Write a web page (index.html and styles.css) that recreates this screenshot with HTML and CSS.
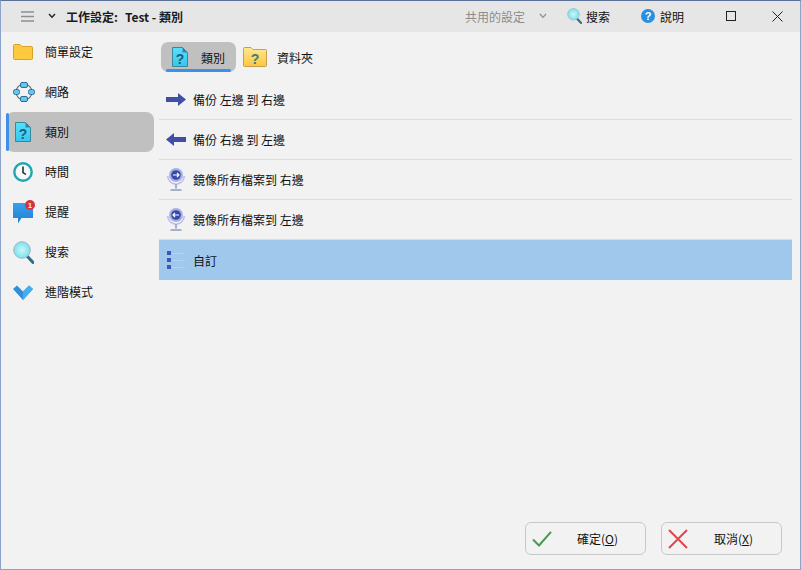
FILE: index.html
```html
<!DOCTYPE html>
<html lang="zh-Hant">
<head>
<meta charset="utf-8">
<title>工作設定</title>
<link rel="stylesheet" href="styles.css">
</head>
<body>
<svg class="defs" width="0" height="0" aria-hidden="true">
  <defs>
    <linearGradient id="docfill" x1="0" y1="0" x2="0" y2="1"><stop offset="0" stop-color="#58e0fb"/><stop offset="1" stop-color="#35c6ef"/></linearGradient>
    <linearGradient id="foldfill" x1="0" y1="0" x2="0" y2="1"><stop offset="0" stop-color="#ffe893"/><stop offset="1" stop-color="#fbc63f"/></linearGradient>
    <linearGradient id="bubble" x1="0" y1="0" x2="0" y2="1"><stop offset="0" stop-color="#3aa0ec"/><stop offset="1" stop-color="#1f7fd0"/></linearGradient>
    <radialGradient id="lensfill"><stop offset="0" stop-color="#c8f7fa"/><stop offset="1" stop-color="#7fdfee"/></radialGradient>
    <symbol id="doc" viewBox="0 0 16 20">
      <path d="M.5 .5H10.500L15.500 5.500V19.500H.5Z" fill="url(#docfill)" stroke="#3a8798"/>
      <path d="M10.500 .5V5.500H15.500Z" fill="#2b86b8"/>
      <text x="8" y="16.500" text-anchor="middle" class="q">?</text>
    </symbol>
    <symbol id="mirror" viewBox="0 0 18 23">
      <path d="M.8 8A8.200 8.200 0 0 0 17.200 8" fill="none" stroke="#b9bfe8" stroke-width="1.600"/>
      <circle cx="9" cy="7" r="7" fill="#a7b0e6"/>
      <circle cx="9" cy="7" r="4.800" fill="#3a49a6"/>
      <path d="M6 7H12M8 5L6 7L8 9" fill="none" stroke="#fff" stroke-width="1.200"/>
      <path d="M9 16V20.500" stroke="#a3abc9" stroke-width="2"/>
      <path d="M3.500 22H14.500" stroke="#a9b0cc" stroke-width="2"/>
    </symbol>
    <symbol id="mirror-r" viewBox="0 0 18 23">
      <path d="M.8 8A8.200 8.200 0 0 0 17.200 8" fill="none" stroke="#b9bfe8" stroke-width="1.600"/>
      <circle cx="9" cy="7" r="7" fill="#a7b0e6"/>
      <circle cx="9" cy="7" r="4.800" fill="#3a49a6"/>
      <path d="M6 7H12M10 5L12 7L10 9" fill="none" stroke="#fff" stroke-width="1.200"/>
      <path d="M9 16V20.500" stroke="#a3abc9" stroke-width="2"/>
      <path d="M3.500 22H14.500" stroke="#a9b0cc" stroke-width="2"/>
    </symbol>
    <symbol id="lens" viewBox="0 0 21 23">
      <path d="M14 15L20 21.500" stroke="#2f6c8c" stroke-width="3" stroke-linecap="round"/>
      <circle cx="9" cy="9" r="8.300" fill="url(#lensfill)" stroke="#9ab8bd"/>
    </symbol>
  </defs>
</svg>
<div class="window">
  <header class="titlebar">
    <svg class="menu-icon" width="14" height="11" viewBox="0 0 14 11"><path d="M0 1H13M0 5.500H13M0 10H13" stroke="#8a8f94" stroke-width="1.300"/></svg>
    <svg class="chev" width="8" height="6" viewBox="0 0 8 6"><path d="M1 1L4 4.300L7 1" fill="none" stroke="#222" stroke-width="1.400"/></svg>
    <h1 class="title">工作設定:<span class="title-name">Test - 類別</span></h1>
    <div class="title-actions">
      <span class="shared">共用的設定</span>
      <svg class="chev-grey" width="8" height="6" viewBox="0 0 8 6"><path d="M1 1L4 4.300L7 1" fill="none" stroke="#8c8c8c" stroke-width="1.200"/></svg>
      <span class="action action-search"><svg width="15" height="16"><use href="#lens"/></svg>搜索</span>
      <span class="action action-help"><svg width="14" height="14" viewBox="0 0 14 14"><circle cx="7" cy="7" r="7" fill="#2b8fe0"/><text x="7" y="11" text-anchor="middle" class="help-q">?</text></svg>說明</span>
      <span class="win-btn"><svg width="10" height="10" viewBox="0 0 10 10"><rect x="0.500" y="0.500" width="9" height="9" fill="none" stroke="#222"/></svg></span>
      <span class="win-btn"><svg width="11" height="11" viewBox="0 0 11 11"><path d="M.5 .5L10.500 10.500M10.500 .5L.5 10.500" stroke="#222"/></svg></span>
    </div>
  </header>
  <div class="main">
    <nav class="sidebar">
      <div class="nav-item"><span class="nav-icon"><svg width="20" height="16" viewBox="0 0 20 16"><path d="M.5 14.500V1.500Q.5 .5 1.500 .5H7L9 2.500H18.500Q19.500 2.500 19.500 3.500V14.500Q19.500 15.500 18.500 15.500H1.500Q.5 15.500 .5 14.500Z" fill="#fdc93f" stroke="#d9a02a"/></svg></span><span class="nav-label">簡單設定</span></div>
      <div class="nav-item"><span class="nav-icon"><svg width="22" height="20" viewBox="0 0 22 20"><circle cx="11" cy="10" r="8" fill="none" stroke="#5f6e7a" stroke-width="1.200"/><g fill="#65c8f0" stroke="#2d6f94"><rect x="7.500" y="0.500" width="7" height="5" rx="1.500"/><rect x="7.500" y="14.500" width="7" height="5" rx="1.500"/><rect x="0.500" y="7.500" width="6" height="5" rx="2"/><rect x="15.500" y="7.500" width="6" height="5" rx="2"/></g></svg></span><span class="nav-label">網路</span></div>
      <div class="nav-item is-active"><span class="nav-icon"><svg width="16" height="20"><use href="#doc"/></svg></span><span class="nav-label">類別</span></div>
      <div class="nav-item"><span class="nav-icon"><svg width="20" height="20" viewBox="0 0 20 20"><circle cx="10" cy="10" r="8.700" fill="#f5fbfb" stroke="#1fa6b0" stroke-width="2.400"/><path d="M10 4.500V10.500L13 12.500" fill="none" stroke="#222" stroke-width="1.500"/></svg></span><span class="nav-label">時間</span></div>
      <div class="nav-item"><span class="nav-icon nav-icon-wide"><svg width="22" height="24" viewBox="0 0 22 24"><path d="M0 3H20V18H8.500L5 23.500V18H0Z" fill="url(#bubble)"/><circle cx="17" cy="5" r="5" fill="#d9323f"/><text x="17" y="7.500" text-anchor="middle" class="badge-num">1</text></svg></span><span class="nav-label">提醒</span></div>
      <div class="nav-item"><span class="nav-icon"><svg width="21" height="23"><use href="#lens"/></svg></span><span class="nav-label">搜索</span></div>
      <div class="nav-item"><span class="nav-icon"><svg width="20" height="15" viewBox="0 0 20 15"><path d="M0 4L4 .5L10 6.500L16 .5L20 4L10 15Z" fill="#2f8fd8"/><path d="M10 6.500L16 .5L20 4L10 15Z" fill="#45aef0"/></svg></span><span class="nav-label">進階模式</span></div>
    </nav>
    <section class="content">
      <div class="tabs">
        <div class="tab is-active"><svg width="16" height="20"><use href="#doc"/></svg><span class="tab-label">類別</span></div>
        <div class="tab tab-plain"><svg width="24" height="20" viewBox="0 0 24 20"><path d="M.5 18.500V1.500Q.5 .5 1.500 .5H8L10 2.500H22.500Q23.500 2.500 23.500 3.500V18.500Q23.500 19.500 22.500 19.500H1.500Q.5 19.500 .5 18.500Z" fill="url(#foldfill)" stroke="#c9a04a"/><text x="12" y="17" text-anchor="middle" class="q q-folder">?</text></svg><span class="tab-label">資料夾</span></div>
      </div>
      <ul class="rows">
        <li class="row"><svg width="20" height="13" viewBox="0 0 20 13"><path d="M0 4H12V0L20 6.500L12 13V9H0Z" fill="#3f4fa8"/></svg>備份 左邊 到 右邊</li>
        <li class="row"><svg width="20" height="13" viewBox="0 0 20 13"><path d="M20 4H8V0L0 6.500L8 13V9H20Z" fill="#3f4fa8"/></svg>備份 右邊 到 左邊</li>
        <li class="row"><svg width="20" height="23"><use href="#mirror-r"/></svg>鏡像所有檔案到 右邊</li>
        <li class="row"><svg width="20" height="23"><use href="#mirror"/></svg>鏡像所有檔案到 左邊</li>
        <li class="row is-selected"><svg width="20" height="18" viewBox="0 0 20 18"><g fill="#3f55b8"><rect x="1" y="0" width="4" height="4"/><rect x="1" y="7" width="4" height="4"/><rect x="1" y="14" width="4" height="4"/></g><path d="M6 2.500H19M6 9.500H19M6 16.500H19" stroke="#aed5f5"/></svg>自訂</li>
      </ul>
    </section>
  </div>
  <footer class="footer">
    <button class="btn"><svg width="20" height="16" viewBox="0 0 20 16"><path d="M1 8.500L7 14.500L19 .8" fill="none" stroke="#459a4d" stroke-width="2"/></svg><span class="btn-label">確定(<u>O</u>)</span></button>
    <button class="btn"><svg width="20" height="20" viewBox="0 0 20 20"><path d="M1 1L19 19M19 1L1 19" stroke="#e0474c" stroke-width="2"/></svg><span class="btn-label">取消(<u>X</u>)</span></button>
  </footer>
</div>
</body>
</html>
```
FILE: styles.css
```css
* { box-sizing: border-box; }
html, body { margin: 0; height: 100%; }
body {
  font-family: "Noto Sans CJK TC", "Noto Sans", sans-serif;
  font-size: 12px;
  color: #111;
  background: #f2f2f2;
}
.defs { position: absolute; }
.q { font: bold 14px "Liberation Sans", sans-serif; fill: #1f5d78; }
.q-folder { fill: #3e7c78; }
.help-q { font: bold 11px "Liberation Sans", sans-serif; fill: #fff; }
.badge-num { font: bold 7px "Liberation Sans", sans-serif; fill: #fff; }
.window {
  height: 570px;
  display: flex;
  flex-direction: column;
  border: 1px solid #8ba3c9;
  border-top-color: #5a7199;
}
.titlebar {
  flex: 0 0 31px;
  display: flex;
  align-items: center;
  background: #e6e6e6;
  padding: 0 0 1px 20px;
}
.chev { margin-left: 13px; }
.title {
  margin: 0 0 0 10px;
  font-size: 12px;
  font-weight: 700;
  color: #1a1a1a;
}
.title-name { margin-left: 7px; }
.title-actions { margin-left: auto; display: flex; align-items: center; }
.shared { color: #8c8c8c; }
.chev-grey { margin-left: 14px; }
.action { display: flex; align-items: center; gap: 4px; color: #111; }
.action-search { margin-left: 20px; }
.action-help { margin-left: 31px; gap: 5px; }
.win-btn { width: 46px; display: flex; justify-content: center; }
.action-help + .win-btn { margin-left: 24px; }
.main { flex: 1; display: flex; min-height: 0; }
.sidebar {
  flex: 0 0 158px;
  padding-left: 5px;
}
.nav-item {
  width: 148px;
  height: 40px;
  display: flex;
  align-items: center;
  border-radius: 8px;
  position: relative;
}
.nav-icon {
  flex: 0 0 39px;
  display: flex;
  justify-content: flex-start;
  padding-left: 7px;
}
.nav-label { margin-bottom: 2px; }
.nav-item.is-active { background: #c0c0c0; }
.nav-item.is-active::before {
  content: "";
  position: absolute;
  left: 0;
  top: 1px;
  bottom: 1px;
  width: 3px;
  background: #3f8fe8;
  border-radius: 2px;
}
.nav-item.is-active .nav-icon { padding-left: 9px; }
.content { flex: 1; padding: 10px 8px 0 0; }
.tabs { display: flex; height: 30px; align-items: center; margin-left: 2px; }
.tab {
  width: 75px;
  height: 30px;
  display: flex;
  align-items: center;
  padding-left: 11px;
  border-radius: 7px;
  position: relative;
}
.tab.is-active { background: #c0c0c0; }
.tab.is-active::after {
  content: "";
  position: absolute;
  left: 5px;
  right: 5px;
  bottom: 0;
  height: 3px;
  background: #3f8fe8;
  border-radius: 2px;
}
.tab .tab-label { margin-left: 13px; }
.tab-plain { padding-left: 7px; width: auto; }
.tab-plain .tab-label { margin-left: 10px; }
.rows { list-style: none; margin: 8px 0 0; padding: 0; }
.row {
  height: 40px;
  display: flex;
  align-items: center;
  gap: 7px;
  padding-left: 7px;
  border-bottom: 1px solid #dcdcdc;
}
.row.is-selected { background: #9fc8ec; border-bottom: 0; }
.footer {
  flex: 0 0 52px;
  display: flex;
  justify-content: flex-end;
  gap: 15px;
  padding: 5px 18px 0 0;
}
.btn {
  width: 121px;
  height: 33px;
  display: flex;
  align-items: center;
  padding: 0 0 0 6px;
  font: inherit;
  color: inherit;
  background: #f2f2f2;
  border: 1px solid #c8c8c8;
  border-radius: 6px;
}
.btn-label { flex: 1; text-align: center; margin-right: 2px; }
```
